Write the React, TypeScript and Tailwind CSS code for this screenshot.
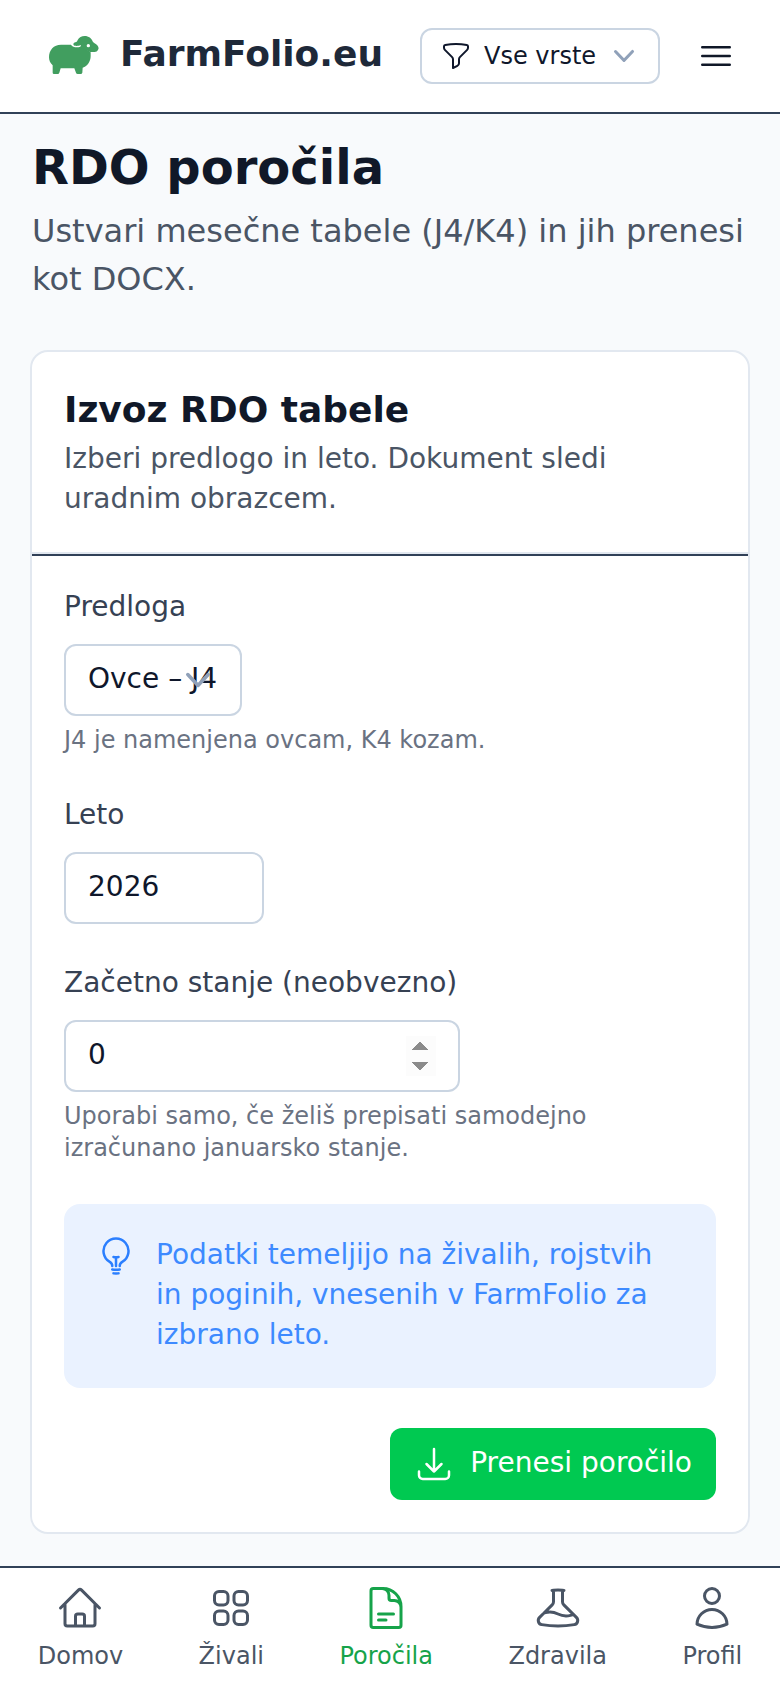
import type { ReactNode } from 'react';
import {
  HiOutlineArrowDownTray,
  HiOutlineBars3,
  HiOutlineBeaker,
  HiOutlineDocumentText,
  HiOutlineFunnel,
  HiOutlineHome,
  HiOutlineLightBulb,
  HiOutlineSquares2X2,
  HiOutlineUser,
} from 'react-icons/hi2';
import clsx from 'clsx';

const navItems = [
  { label: 'Domov', icon: HiOutlineHome },
  { label: 'Živali', icon: HiOutlineSquares2X2 },
  { label: 'Poročila', icon: HiOutlineDocumentText, active: true },
  { label: 'Zdravila', icon: HiOutlineBeaker },
  { label: 'Profil', icon: HiOutlineUser },
];

const ChevronDown = ({ className }: { className?: string }) => (
  <svg viewBox="0 0 20 20" fill="currentColor" className={className}>
    <path
      fillRule="evenodd"
      clipRule="evenodd"
      d="M5.23 7.21a.75.75 0 0 1 1.06.02L10 11.168l3.71-3.938a.75.75 0 1 1 1.08 1.04l-4.25 4.5a.75.75 0 0 1-1.08 0l-4.25-4.5a.75.75 0 0 1 .02-1.06"
    />
  </svg>
);

const SheepLogo = () => (
  <svg viewBox="0 0 150 114" className="mb-[3px] h-[38px] w-[50px]" fill="#419e5f">
    <path d="M36 26 H66 C71 34 84 36 94 32 L96 27 L100 27 C104 33 110 38 118 44 C122 46 125 46 125 50 V60 C125 76 116 90 101 95 L100 110 Q99 114 95 114 H86 Q82 114 81 110 L76 97 H35 L31 110 Q30 114 26 114 H15 Q11 114 11 110 V88 C4 82 0 74 0 64 C0 42 14 26 36 26Z" />
    <path
      fillRule="evenodd"
      d="M86 12 C90 4 98 0 107 0 C119 0 128 7 132 18 C138 23 146 27 148 33 Q150 37 147 42 Q144 48 137 48 H124 L96 36 V27 C90 30 76 31 74 27 C71 21 78 18 83 17 Q85 16 86 12Z M118 24 A5 5 0 1 0 118 34 A5 5 0 1 0 118 24Z"
    />
  </svg>
);

const Header = () => (
  <header className="flex h-[114px] items-center border-b-2 border-[#314158] bg-white pl-[49px] pr-11">
    <SheepLogo />
    <span className="mb-1 ml-[21px] text-4xl font-bold text-[#1e2939]">FarmFolio.eu</span>
    <button className="ml-auto flex h-14 w-60 items-center rounded-xl border-2 border-[#cad5e2] bg-white pl-[18px] pr-3.5 text-2xl text-[#0f172b]">
      <HiOutlineFunnel className="size-8" />
      <span className="ml-3">Vse vrste</span>
      <ChevronDown className="ml-auto size-10 text-[#90a1b9]" />
    </button>
    <button className="ml-9 text-[#101828]">
      <HiOutlineBars3 className="size-10" />
    </button>
  </header>
);

const Field = ({ label, help, children }: { label: string; help?: string; children: ReactNode }) => (
  <div className="flex flex-col items-start">
    <label className="-mt-px text-[28px] leading-10 text-[#364153]">{label}</label>
    <div className="mt-[17px] flex">{children}</div>
    {help && <p className="mt-2 text-2xl leading-8 text-[#6a7282]">{help}</p>}
  </div>
);

const inputClass =
  'relative flex h-[72px] items-center rounded-xl border-2 border-[#cad5e2] bg-white px-[22px] pb-0.5 text-[28px] text-[#0f172b]';

const ReportCard = () => (
  <section className="-mx-0.5 rounded-[18px] border-2 border-[#e2e8f0] bg-white">
    <div className="border-b-2 border-[#e2e8f0] px-8 pb-[33px] pt-[30px]">
      <h2 className="text-4xl font-bold leading-[56px] text-[#101828]">Izvoz RDO tabele</h2>
      <p className="mt-px text-[28px] leading-10 text-[#4a5565]">
        Izberi predlogo in leto. Dokument sledi uradnim obrazcem.
      </p>
    </div>

    <div className="border-t-2 border-[#314158] p-8">
      <div className="flex flex-col gap-10">
        <Field label="Predloga" help="J4 je namenjena ovcam, K4 kozam.">
          <div className={clsx(inputClass, 'w-[178px] whitespace-nowrap')}>
            Ovce – J4
            <ChevronDown className="absolute right-[18px] top-2.5 size-12 text-[#90a1b9]" />
          </div>
        </Field>

        <Field label="Leto">
          <div className={clsx(inputClass, 'w-[200px]')}>2026</div>
        </Field>

        <Field
          label="Začetno stanje (neobvezno)"
          help="Uporabi samo, če želiš prepisati samodejno izračunano januarsko stanje."
        >
          <div className={clsx(inputClass, 'w-[396px]')}>
            0
            <svg
              viewBox="0 0 30 40"
              className="absolute right-[22px] top-3.5 h-10 w-[30px]"
              shapeRendering="crispEdges"
            >
              <rect width="30" height="40" fill="#fcfcfc" />
              <path d="M6 14 L14 5 L22 14Z M6 26 H22 L14 35Z" fill="#8b8b8b" />
            </svg>
          </div>
        </Field>
      </div>

      <div className="mt-10 flex gap-5 rounded-2xl bg-[#eaf2ff] p-8 text-[#2b7fff]">
        <HiOutlineLightBulb className="size-10 shrink-0" />
        <p className="-mt-px mb-px text-[28px] leading-10 opacity-90">
          Podatki temeljijo na živalih, rojstvih in poginih, vnesenih v FarmFolio za izbrano leto.
        </p>
      </div>

      <div className="mt-10 flex justify-end">
        <button className="flex h-[72px] items-center gap-4 rounded-xl bg-[#00c951] px-6 text-[28px] text-white">
          <HiOutlineArrowDownTray className="size-10" />
          <span className="mb-0.5">Prenesi poročilo</span>
        </button>
      </div>
    </div>
  </section>
);

const BottomNav = () => (
  <nav className="flex h-[122px] justify-around border-t-2 border-[#314158] bg-white pt-4">
    {navItems.map(({ label, icon: Icon, active }) => (
      <a key={label} className={clsx('flex flex-col items-center', active ? 'text-[#16a34a]' : 'text-[#4a5565]')}>
        <Icon className="size-12" />
        <span className="mt-2 text-2xl leading-8">{label}</span>
      </a>
    ))}
  </nav>
);

export default function App() {
  return (
    <div className="flex h-[1688px] w-[780px] flex-col bg-[#f8fafc] font-['DejaVu_Sans',sans-serif]">
      <Header />
      <main className="flex-1 px-8 pt-[21px]">
        <h1 className="text-5xl font-bold leading-[64px] text-[#101828]">RDO poročila</h1>
        <p className="mb-[47px] mt-2 text-[32px] leading-[48px] text-[#4a5565]">
          Ustvari mesečne tabele (J4/K4) in jih prenesi kot DOCX.
        </p>
        <ReportCard />
      </main>
      <BottomNav />
    </div>
  );
}
